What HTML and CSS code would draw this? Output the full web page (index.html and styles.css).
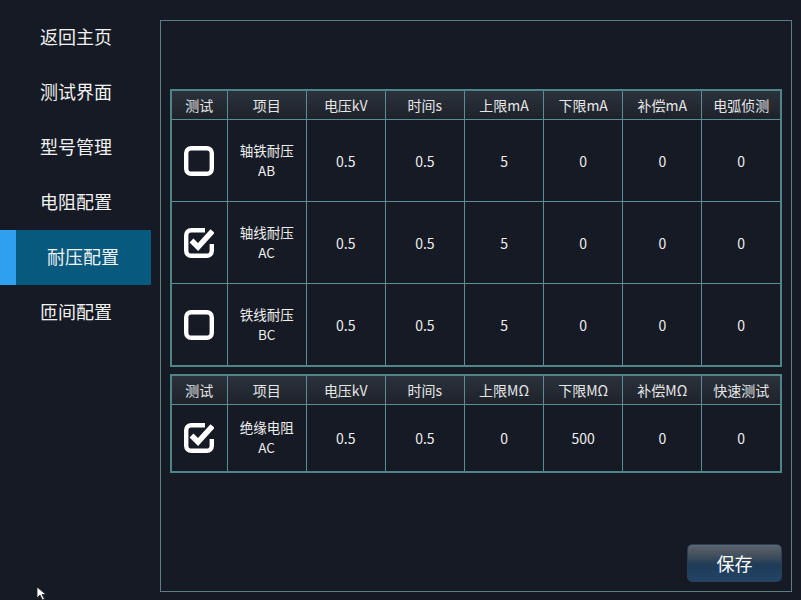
FILE: index.html
```html
<!DOCTYPE html>
<html lang="zh">
<head>
<meta charset="utf-8">
<link rel="stylesheet" href="styles.css">
</head>
<body>
<div class="app">
  <nav class="sidebar">
    <div class="nav-item">返回主页</div>
    <div class="nav-item">测试界面</div>
    <div class="nav-item">型号管理</div>
    <div class="nav-item">电阻配置</div>
    <div class="nav-item active">耐压配置</div>
    <div class="nav-item">匝间配置</div>
  </nav>
  <main class="panel">
    <table class="grid grid-a">
      <colgroup><col class="c-first"><col span="7"></colgroup>
      <thead>
        <tr><th>测试</th><th>项目</th><th>电压kV</th><th>时间s</th><th>上限mA</th><th>下限mA</th><th>补偿mA</th><th>电弧侦测</th></tr>
      </thead>
      <tbody>
        <tr>
          <td><svg class="cb" viewBox="0 0 30 30"><rect x="2.2" y="2.2" width="25.6" height="25.6" rx="5" fill="none" stroke="#fff" stroke-width="4.4"/></svg></td>
          <td><div class="two">轴铁耐压<br>AB</div></td><td>0.5</td><td>0.5</td><td>5</td><td>0</td><td>0</td><td>0</td>
        </tr>
        <tr>
          <td><svg class="cb" viewBox="0 0 30 30"><path d="M21 2.2 H7.2 A5 5 0 0 0 2.2 7.2 V22.8 A5 5 0 0 0 7.2 27.8 H22.8 A5 5 0 0 0 27.8 22.8 V16" fill="none" stroke="#fff" stroke-width="4.4"/><path d="M7.5 12.5 L14 19 L28.5 3" fill="none" stroke="#fff" stroke-width="5.5" stroke-linejoin="miter"/></svg></td>
          <td><div class="two">轴线耐压<br>AC</div></td><td>0.5</td><td>0.5</td><td>5</td><td>0</td><td>0</td><td>0</td>
        </tr>
        <tr>
          <td><svg class="cb" viewBox="0 0 30 30"><rect x="2.2" y="2.2" width="25.6" height="25.6" rx="5" fill="none" stroke="#fff" stroke-width="4.4"/></svg></td>
          <td><div class="two">铁线耐压<br>BC</div></td><td>0.5</td><td>0.5</td><td>5</td><td>0</td><td>0</td><td>0</td>
        </tr>
      </tbody>
    </table>
    <table class="grid grid-b">
      <colgroup><col class="c-first"><col span="7"></colgroup>
      <thead>
        <tr><th>测试</th><th>项目</th><th>电压kV</th><th>时间s</th><th>上限MΩ</th><th>下限MΩ</th><th>补偿MΩ</th><th>快速测试</th></tr>
      </thead>
      <tbody>
        <tr>
          <td><svg class="cb" viewBox="0 0 30 30"><path d="M21 2.2 H7.2 A5 5 0 0 0 2.2 7.2 V22.8 A5 5 0 0 0 7.2 27.8 H22.8 A5 5 0 0 0 27.8 22.8 V16" fill="none" stroke="#fff" stroke-width="4.4"/><path d="M7.5 12.5 L14 19 L28.5 3" fill="none" stroke="#fff" stroke-width="5.5" stroke-linejoin="miter"/></svg></td>
          <td><div class="two">绝缘电阻<br>AC</div></td><td>0.5</td><td>0.5</td><td>0</td><td>500</td><td>0</td><td>0</td>
        </tr>
      </tbody>
    </table>
    <div class="actions"><button class="btn-save">保存</button></div>
  </main>
</div>
<svg class="cursor" viewBox="0 0 16 16"><path d="M1 1 L1 12 L4 9 L6.5 14 L8.5 13 L6 8.5 L10 8.5 Z" fill="#fff" stroke="#222" stroke-width="0.8"/></svg>
</body>
</html>
```
FILE: styles.css
```css
html, body {
  margin: 0;
  padding: 0;
  background: #151a24;
  width: 801px;
  height: 600px;
  overflow: hidden;
  font-family: "Noto Sans CJK SC", "Noto Sans", "DejaVu Sans", sans-serif;
  color: #f0f0f0;
}
.app {
  display: flex;
  height: 600px;
}
.sidebar {
  width: 151px;
  padding-top: 10px;
  flex-shrink: 0;
}
.nav-item {
  height: 55px;
  line-height: 53px;
  padding-left: 40px;
  font-size: 18px;
  color: #f2f2f2;
  box-sizing: border-box;
}
.nav-item.active {
  background: #07597e;
  border-left: 16px solid #2f9fef;
  padding-left: 31px;
}
.panel {
  margin: 20px 0 0 9px;
  width: 632px;
  height: 572px;
  box-sizing: border-box;
  border: 1px solid #5c7d84;
  padding: 68px 9px 9px 9px;
  display: flex;
  flex-direction: column;
}
.grid {
  width: 612px;
  border-collapse: collapse;
  table-layout: fixed;
  border: 2px solid #4d8589;
}
.grid col { width: 79px; }
.grid col.c-first { width: 56px; }
.grid th, .grid td {
  border: 1px solid #5b8e94;
  text-align: center;
  vertical-align: middle;
  padding: 0;
  font-weight: normal;
  font-size: 14px;
}
.grid th {
  height: 28px;
  background: linear-gradient(#2c323b, #1d222b);
  color: #e6e6e6;
}
.grid td {
  color: #eeeeee;
}
.two {
  font-size: 13.5px;
  line-height: 19.6px;
}
.grid-a td { height: 81px; }
.grid-b { margin-top: 7px; }
.grid-b td { height: 66px; }
.cb {
  width: 30px;
  height: 30px;
  display: block;
  margin: 0 auto;
}
.actions {
  margin-top: auto;
  display: flex;
  justify-content: flex-end;
}
.btn-save {
  width: 95px;
  height: 38px;
  border: 1px solid #2a4058;
  border-radius: 5px;
  background: linear-gradient(#5e656d 0%, #3c4b5a 35%, #1f3b58 55%, #234466 100%);
  color: #fff;
  font-family: "Noto Sans CJK SC", sans-serif;
  font-size: 18px;
  padding: 0;
}
.cursor {
  position: absolute;
  left: 36px;
  top: 586px;
  width: 16px;
  height: 16px;
}
```
